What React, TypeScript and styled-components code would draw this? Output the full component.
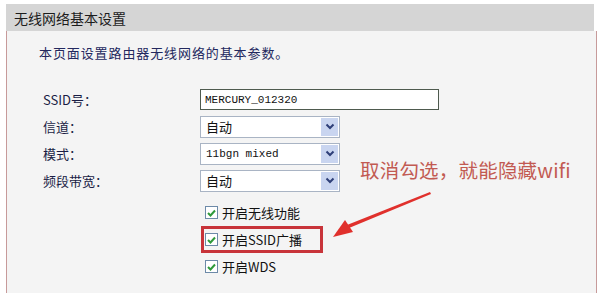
import React from 'react';
import styled, { createGlobalStyle } from 'styled-components';

const GlobalStyle = createGlobalStyle`
  html, body {
    margin: 0;
    padding: 0;
    background: #ffffff;
  }
  body {
    font-family: "Noto Sans CJK SC", "Liberation Sans", sans-serif;
  }
`;

const Page = styled.div`
  width: 599px;
  height: 293px;
  padding: 4px 2px 0 6px;
  box-sizing: border-box;
  overflow: hidden;
  position: relative;
`;

const Header = styled.div`
  height: 27px;
  background: #d5d5d5;
  display: flex;
  align-items: center;
  padding-left: 8px;
  font-size: 14px;
  color: #1c1c1c;
  margin-right: 3px;
`;

const Body = styled.div`
  height: 262px;
  background: #f4f4f4;
  border-left: 1px solid #c79a9a;
  border-right: 1px solid #c79a9a;
  padding: 12px 0 0 32px;
  box-sizing: border-box;
`;

const Intro = styled.div`
  font-size: 13px;
  color: #23285e;
  letter-spacing: 0.9px;
  height: 20px;
  line-height: 20px;
`;

const Form = styled.div`
  margin-top: 23px;
  display: grid;
  grid-template-columns: 161px auto;
  grid-auto-rows: 27px;
  align-items: center;
`;

const Label = styled.div`
  font-size: 13px;
  color: #1a1d45;
  padding-left: 4px;
`;

const TextInput = styled.div`
  width: 239px;
  height: 21px;
  box-sizing: border-box;
  border: 1px solid #4e5a4e;
  background: #fff;
  font-family: "Liberation Mono", monospace;
  font-size: 11px;
  color: #111;
  display: flex;
  align-items: center;
  padding-left: 4px;
`;

const Select = styled.div`
  width: 140px;
  height: 22px;
  box-sizing: border-box;
  border: 1px solid #a9b4c4;
  background: #fff;
  display: flex;
  align-items: center;
  justify-content: space-between;
  padding: 1px;
`;

const SelectText = styled.span<{ $mono?: boolean }>`
  padding-left: 4px;
  font-size: ${(p) => (p.$mono ? '11px' : '13px')};
  font-family: ${(p) =>
    p.$mono
      ? '"Liberation Mono", monospace'
      : '"Noto Sans CJK SC", "Liberation Sans", sans-serif'};
  color: #111;
`;

const ArrowBtn = styled.span`
  width: 17px;
  height: 18px;
  background: #c9d5f0;
  display: flex;
  align-items: center;
  justify-content: center;
`;

const Checks = styled.div`
  margin-left: 162px;
  margin-top: 5px;
  display: flex;
  flex-direction: column;
`;

const CheckRow = styled.div<{ $hl?: boolean }>`
  display: flex;
  align-items: center;
  gap: 4px;
  height: 27px;
  width: 122px;
  box-sizing: border-box;
  padding-left: 1px;
  border: 3px solid ${(p) => (p.$hl ? '#c8343a' : 'transparent')};
`;

const Box = styled.span`
  width: 13px;
  height: 13px;
  box-sizing: border-box;
  border: 1px solid #6d8aa8;
  background: #fff;
  display: flex;
  align-items: center;
  justify-content: center;
`;

const CheckLabel = styled.span`
  font-size: 13px;
  color: #111;
`;

const Note = styled.div`
  position: absolute;
  left: 360px;
  top: 155px;
  font-size: 19.5px;
  color: #c25a52;
  letter-spacing: 0.2px;
`;

const Pointer = styled.svg`
  position: absolute;
  left: 325px;
  top: 190px;
`;

function Chevron() {
  return (
    <svg width="10" height="7" viewBox="0 0 10 7">
      <path d="M1.5 1.5 L5 5 L8.5 1.5" fill="none" stroke="#2e3f78" strokeWidth="2" />
    </svg>
  );
}

function Tick() {
  return (
    <svg width="9" height="8" viewBox="0 0 9 8">
      <path d="M1 4 L3.5 6.5 L8 1.5" fill="none" stroke="#2f9a3a" strokeWidth="2" />
    </svg>
  );
}

export default function App() {
  const checks = [
    { label: '开启无线功能' },
    { label: '开启SSID广播', hl: true },
    { label: '开启WDS' },
  ];

  return (
    <>
      <GlobalStyle />
      <Page>
        <Header>无线网络基本设置</Header>
        <Body>
          <Intro>本页面设置路由器无线网络的基本参数。</Intro>
          <Form>
            <Label>SSID号：</Label>
            <TextInput>MERCURY_012320</TextInput>
            <Label>信道：</Label>
            <Select>
              <SelectText>自动</SelectText>
              <ArrowBtn><Chevron /></ArrowBtn>
            </Select>
            <Label>模式：</Label>
            <Select>
              <SelectText $mono>11bgn mixed</SelectText>
              <ArrowBtn><Chevron /></ArrowBtn>
            </Select>
            <Label>频段带宽：</Label>
            <Select>
              <SelectText>自动</SelectText>
              <ArrowBtn><Chevron /></ArrowBtn>
            </Select>
          </Form>
          <Checks>
            {checks.map((c) => (
              <CheckRow key={c.label} $hl={c.hl}>
                <Box><Tick /></Box>
                <CheckLabel>{c.label}</CheckLabel>
              </CheckRow>
            ))}
          </Checks>
        </Body>
        <Note>取消勾选，就能隐藏wifi</Note>
        <Pointer width="112" height="52" viewBox="0 0 112 52">
          <path d="M106 4 L24 38 L22 35 L105 2 Z" fill="#e0302c" />
          <path d="M8 47 L20 30 L28 42 Z" fill="#e0302c" />
        </Pointer>
      </Page>
    </>
  );
}
